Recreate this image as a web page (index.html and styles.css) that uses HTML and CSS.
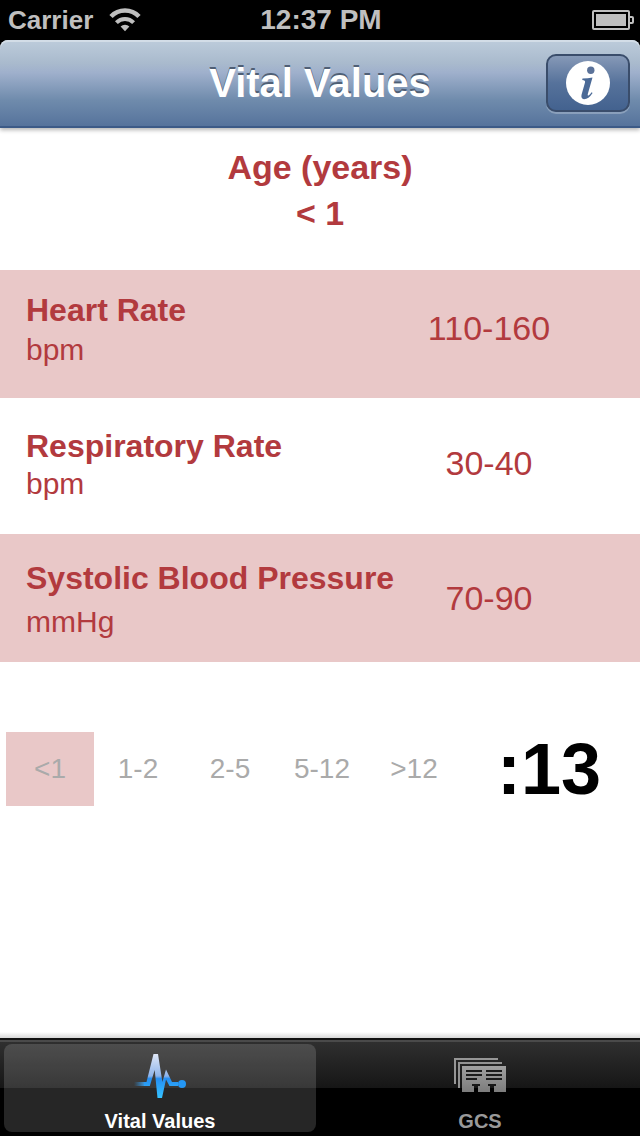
FILE: index.html
```html
<!DOCTYPE html>
<html lang="en">
<head>
    <meta charset="UTF-8">
    <meta name="viewport" content="width=device-width, initial-scale=1.0">
    <title>Vital Values</title>
    <link rel="stylesheet" href="styles.css">
</head>
<body>
    <div class="status-bar">
        <div class="carrier">
            <span>Carrier</span>
            <svg class="wifi-icon" width="32" height="24" viewBox="0 0 32 24">
                <path d="M2 8.5 A19.5 19.5 0 0 1 30 8.5" fill="none" stroke="#bfbfbf" stroke-width="4.6"/>
                <path d="M7.4 14.6 A12 12 0 0 1 24.6 14.6" fill="none" stroke="#bfbfbf" stroke-width="4"/>
                <path d="M16 23.2 L11.6 18.6 A6.2 6.2 0 0 1 20.4 18.6 Z" fill="#bfbfbf"/>
            </svg>
        </div>
        <div class="clock">12:37 PM</div>
        <svg class="battery-icon" width="42" height="20" viewBox="0 0 42 20">
            <rect x="1" y="1" width="36" height="18" rx="1" fill="none" stroke="#bfbfbf" stroke-width="2"/>
            <rect x="4" y="4" width="30" height="12" fill="#bfbfbf"/>
            <path d="M38 7 H40 Q41 7 41 8 V12 Q41 13 40 13 H38" fill="none" stroke="#bfbfbf" stroke-width="2"/>
        </svg>
    </div>

    <header class="nav-bar">
        <h1 class="nav-title">Vital Values</h1>
        <button class="info-button" type="button" aria-label="Info">
            <svg width="44" height="44" viewBox="0 0 44 44">
                <circle cx="22" cy="22" r="22" fill="#fff"/>
                <circle cx="24.8" cy="9.3" r="3.7" fill="#5b7299"/>
                <path d="M16.5 17.5 Q22 17.5 26.5 16.5 L21.8 33 Q21.3 35 22.6 34.4 Q24 33.6 25.6 31.3 L26.6 32 Q22.5 38.3 18 38.2 Q14.6 37.8 15.6 33.6 L19 21.4 Q19.7 19 16.2 18.9 Z" fill="#4b6a97"/>
            </svg>
        </button>
    </header>

    <main class="content">
        <section class="age">
            <h2>Age (years)</h2>
            <p>&lt; 1</p>
        </section>

        <section class="vital heart">
            <div class="vital-name">
                <h3>Heart Rate</h3>
                <p>bpm</p>
            </div>
            <div class="vital-value">110-160</div>
        </section>
        <section class="vital respiratory">
            <div class="vital-name">
                <h3>Respiratory Rate</h3>
                <p>bpm</p>
            </div>
            <div class="vital-value">30-40</div>
        </section>
        <section class="vital systolic">
            <div class="vital-name">
                <h3>Systolic Blood Pressure</h3>
                <p>mmHg</p>
            </div>
            <div class="vital-value">70-90</div>
        </section>

        <section class="controls">
            <div class="age-picker">
                <button class="age-button active" type="button">&lt;1</button>
                <button class="age-button" type="button">1-2</button>
                <button class="age-button" type="button">2-5</button>
                <button class="age-button" type="button">5-12</button>
                <button class="age-button" type="button">&gt;12</button>
            </div>
            <div class="timer">:13</div>
        </section>
    </main>

    <nav class="tab-bar">
        <button class="tab selected" type="button">
            <svg width="56" height="50" viewBox="0 0 56 50">
                <defs>
                    <linearGradient id="pulse" gradientUnits="userSpaceOnUse" x1="0" y1="3" x2="0" y2="47">
                        <stop offset="0" stop-color="#dfe7f7"/>
                        <stop offset="0.5" stop-color="#8fb4ea"/>
                        <stop offset="0.56" stop-color="#258ef2"/>
                        <stop offset="1" stop-color="#35c3ff"/>
                    </linearGradient>
                    <linearGradient id="tail" gradientUnits="userSpaceOnUse" x1="2" y1="0" x2="14" y2="0">
                        <stop offset="0" stop-color="#2f9df2" stop-opacity="0"/>
                        <stop offset="1" stop-color="#3da5f5"/>
                    </linearGradient>
                </defs>
                <rect x="2" y="31" width="11" height="4" fill="url(#tail)"/>
                <path d="M12 31 H14.5 L21.5 3 H26 L30.4 31 L34 18.5 L40 31 H46 V35 H37.5 L34 28.5 L30 47 H25.5 L22.7 19 L17.8 35 H12 Z" fill="url(#pulse)"/>
                <circle cx="50" cy="33" r="4" fill="#2497f5"/>
            </svg>
            <span>Vital Values</span>
        </button>
        <button class="tab" type="button">
            <svg width="56" height="50" viewBox="0 0 56 50">
                <defs>
                    <linearGradient id="cards" x1="0" y1="0" x2="0" y2="1">
                        <stop offset="0" stop-color="#a0a0a0"/>
                        <stop offset="1" stop-color="#7c7c7c"/>
                    </linearGradient>
                </defs>
                <path d="M2 7 H46 V9 H4 V33 H2 Z" fill="#969696"/>
                <path d="M6 11 H50 V13 H8 V37 H6 Z" fill="#939393"/>
                <path d="M10 15 H54 V41 H42 V35 H44 V33 H36 V35 H38 V41 H26 V35 H28 V33 H20 V35 H22 V41 H10 Z" fill="url(#cards)"/>
                <path d="M14 20 H30 M34 20 H50 M14 24 H30 M34 24 H50 M14 28 H25 M34 28 H50" stroke="#1a1a1a" stroke-width="2"/>
            </svg>
            <span>GCS</span>
        </button>
    </nav>
</body>
</html>
```

FILE: styles.css
```css
* {
    box-sizing: border-box;
}

body {
    font-family: "Liberation Sans", Arial, Helvetica, sans-serif;
    margin: 0;
    display: flex;
    flex-direction: column;
    min-height: 100vh;
    background-color: #000;
}

h1, h2, h3, p {
    margin: 0;
}

button {
    font-family: inherit;
    border: none;
    padding: 0;
    background: none;
    cursor: pointer;
}

svg {
    display: block;
    flex-shrink: 0;
}

/* Status bar */
.status-bar {
    display: grid;
    grid-template-columns: 1fr auto 1fr;
    align-items: center;
    height: 40px;
    padding: 0 6px 0 8px;
    color: #bfbfbf;
    font-size: 26px;
    font-weight: bold;
}

.carrier {
    display: flex;
    align-items: center;
    gap: 16px;
}

.clock {
    font-size: 28px;
}

.battery-icon {
    justify-self: end;
}

/* Navigation bar */
.nav-bar {
    display: grid;
    grid-template-columns: 1fr auto 1fr;
    align-items: center;
    height: 88px;
    padding: 0 10px;
    border-bottom: 2px solid #3c5a87;
    border-radius: 8px 8px 0 0;
    background: linear-gradient(#bdccdb, #a9bacd 27%, #9fb0cc 38%, #6f8bac 70%, #56739c);
    box-shadow: inset 0 2px 0 #d3dde7, 0 2px 4px rgba(0, 0, 0, 0.3);
    position: relative;
}

.nav-title {
    grid-column: 2;
    font-size: 40px;
    line-height: 46px;
    color: #fff;
    text-shadow: 0 -2px 0 #4f5f75;
}

.info-button {
    justify-self: end;
    display: flex;
    align-items: center;
    justify-content: center;
    width: 84px;
    height: 58px;
    border: 2px solid #3a4d6b;
    border-radius: 10px;
    background: linear-gradient(#8699b7, #56729b 50%, #43628f);
    box-shadow: 0 2px 0 rgba(255, 255, 255, 0.25);
}

/* Content */
.content {
    flex: 1;
    background: #fff linear-gradient(#fff, #d8d8d8) bottom / 100% 6px no-repeat;
    color: #b23a3e;
}

.age {
    padding: 16px 0 34px;
    text-align: center;
    font-size: 34px;
    font-weight: bold;
    line-height: 46px;
}

.age h2 {
    font-size: 34px;
}

.vital {
    display: flex;
    justify-content: space-between;
    align-items: center;
    padding: 0 88px 0 26px;
}

.vital-name {
    display: flex;
    flex-direction: column;
    line-height: 36px;
}

.vital-name h3 {
    font-size: 32px;
}

.vital-name p {
    font-size: 30px;
}

.vital-value {
    min-width: 126px;
    padding-bottom: 4px;
    font-size: 34px;
    line-height: 36px;
    text-align: center;
}

.heart,
.systolic {
    background-color: #e9c8c8;
}

.heart {
    padding-top: 22px;
    padding-bottom: 30px;
}

.heart .vital-name {
    gap: 4px;
}

.respiratory {
    padding-top: 30px;
    padding-bottom: 32px;
}

.respiratory .vital-name {
    gap: 2px;
}

.systolic {
    padding-top: 26px;
    padding-bottom: 22px;
}

.systolic .vital-name {
    gap: 8px;
}

/* Age picker and timer */
.controls {
    display: flex;
    align-items: center;
    padding: 70px 0 0 6px;
}

.age-picker {
    display: flex;
}

.age-button {
    width: 88px;
    height: 74px;
    font-size: 28px;
    color: #aaa;
}

.age-button + .age-button + .age-button {
    margin-left: 4px;
}

.age-button.active {
    background-color: #e9c8c8;
}

.timer {
    flex: 1;
    color: #000;
    font-size: 72px;
    font-weight: bold;
    line-height: 74px;
    text-align: center;
}

/* Tab bar */
.tab-bar {
    display: flex;
    gap: 8px;
    height: 98px;
    padding: 4px;
    border-top: 2px solid #111;
    background: linear-gradient(#4a4a4a 2px, #2f2f2f 2px, #161616 48px, #000 48px);
}

.tab {
    flex: 1;
    display: flex;
    flex-direction: column;
    align-items: center;
    gap: 9px;
    padding-top: 7px;
    border-radius: 8px;
    color: #999;
    font-size: 20px;
    font-weight: bold;
    line-height: 22px;
}

.tab.selected {
    background-color: rgba(255, 255, 255, 0.15);
    color: #fff;
}
```
